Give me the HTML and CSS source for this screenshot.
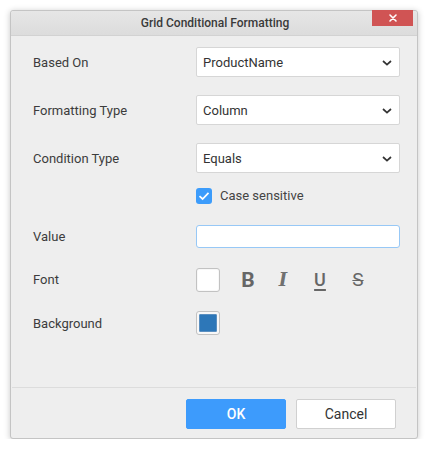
FILE: index.html
```html
<!DOCTYPE html>
<html>
<head>
<meta charset="utf-8">
<link rel="stylesheet" href="styles.css">
</head>
<body>
<div class="dialog">
  <div class="titlebar">
    <span class="title">Grid Conditional Formatting</span>
    <button class="close" aria-label="Close">
      <svg width="10" height="10" viewBox="0 0 10 10"><path d="M2 2 L8 8 M8 2 L2 8" stroke="#fff" stroke-width="1.6" stroke-linecap="round"/></svg>
    </button>
  </div>
  <div class="content">
    <div class="row r-select">
      <div class="label">Based On</div>
      <div class="select"><span>ProductName</span><svg class="chev" width="10" height="6" viewBox="0 0 10 6"><path d="M1 1 L5 4.6 L9 1" fill="none" stroke="#333" stroke-width="1.7"/></svg></div>
    </div>
    <div class="row r-select gap">
      <div class="label">Formatting Type</div>
      <div class="select"><span>Column</span><svg class="chev" width="10" height="6" viewBox="0 0 10 6"><path d="M1 1 L5 4.6 L9 1" fill="none" stroke="#333" stroke-width="1.7"/></svg></div>
    </div>
    <div class="row r-select gap">
      <div class="label">Condition Type</div>
      <div class="select"><span>Equals</span><svg class="chev" width="10" height="6" viewBox="0 0 10 6"><path d="M1 1 L5 4.6 L9 1" fill="none" stroke="#333" stroke-width="1.7"/></svg></div>
    </div>
    <div class="row r-check">
      <div class="label"></div>
      <div class="checkwrap">
        <span class="checkbox"><svg width="12" height="10" viewBox="0 0 12 10"><path d="M1.5 5.2 L4.6 8 L10.5 1.8" fill="none" stroke="#fff" stroke-width="1.7"/></svg></span>
        <span class="checklabel">Case sensitive</span>
      </div>
    </div>
    <div class="row r-value">
      <div class="label">Value</div>
      <div class="input"></div>
    </div>
    <div class="row r-font">
      <div class="label">Font</div>
      <div class="fontctl">
        <span class="swatch"><span class="fill white"></span></span>
        <span class="fbtn b">B</span>
        <span class="fbtn i">I</span>
        <span class="fbtn u">U</span>
        <span class="fbtn s">S</span>
      </div>
    </div>
    <div class="row r-bg">
      <div class="label">Background</div>
      <div class="fontctl">
        <span class="swatch"><span class="fill blue"></span></span>
      </div>
    </div>
  </div>
  <div class="footer">
    <button class="btn ok">OK</button>
    <button class="btn cancel">Cancel</button>
  </div>
</div>
</body>
</html>
```
FILE: styles.css
```css
html, body {
  margin: 0;
  padding: 0;
  background: #ffffff;
  font-family: Roboto, "Liberation Sans", Arial, sans-serif;
}
.dialog {
  margin: 10px 0 0 10px;
  width: 406px;
  height: 427px;
  border: 1px solid #c4c4c4;
  border-radius: 3px;
  background: #eeeeee;
  box-shadow: 0 1px 6px rgba(0,0,0,0.22);
  display: flex;
  flex-direction: column;
  position: relative;
}
.titlebar {
  height: 24px;
  flex: none;
  border-bottom: 1px solid #d2d2d2;
  background: linear-gradient(#e6e6e6, #dcdcdc);
  display: flex;
  align-items: center;
  justify-content: center;
  border-radius: 3px 3px 0 0;
}
.title {
  font-size: 12px;
  font-weight: 500;
  color: #3a3a3a;
  margin-left: 2px;
}
.close {
  position: absolute;
  top: -1px;
  right: 4px;
  width: 41px;
  height: 16px;
  background: #d05454;
  border: none;
  padding: 0;
  display: flex;
  align-items: center;
  justify-content: center;
}
.content {
  flex: 1;
  padding: 11px 17px 0 22px;
  display: flex;
  flex-direction: column;
}
.row {
  display: flex;
  align-items: center;
}
.label {
  width: 163px;
  flex: none;
  font-size: 13px;
  color: #3c3c3c;
}
.r-select { height: 30px; }
.r-select.gap { margin-top: 18px; }
.select {
  flex: 1;
  height: 28px;
  background: #fff;
  border: 1px solid #d6d6d6;
  border-radius: 2px;
  display: flex;
  align-items: center;
  justify-content: space-between;
  padding: 0 7px 0 6px;
  font-size: 13px;
  color: #333;
}
.chev { margin-top: 1px; }
.r-check { margin-top: 14px; height: 17px; }
.checkwrap { display: flex; align-items: center; }
.checkbox {
  width: 16px;
  height: 16px;
  background: #3c9cfb;
  border-radius: 3px;
  display: flex;
  align-items: center;
  justify-content: center;
}
.checklabel {
  margin-left: 8px;
  font-size: 13px;
  color: #444;
}
.r-value { margin-top: 20px; height: 25px; }
.input {
  flex: 1;
  height: 21px;
  background: #fff;
  border: 1px solid #97c8f6;
  border-radius: 3px;
}
.r-font { margin-top: 18px; height: 25px; }
.r-bg { margin-top: 18px; height: 26px; }
.fontctl { display: flex; align-items: center; }
.swatch {
  width: 20px;
  height: 20px;
  border: 1px solid #c2c2c2;
  border-radius: 3px;
  padding: 1px;
  background: #f8f8f8;
  display: flex;
}
.fill { flex: 1; border-radius: 1px; }
.fill.white { background: #ffffff; }
.fill.blue { background: #2d77b8; border: 1px solid #5a8fc0; margin: 1px; }
.fbtn {
  font-size: 21px;
  color: #666;
  width: 14px;
  text-align: center;
  line-height: 24px;
}
.fbtn.b { font-weight: bold; margin-left: 21px; }
.fbtn.i { font-style: italic; font-family: "DejaVu Serif", serif; font-size: 18px; font-weight: bold; color: #707070; margin-left: 21px; }
.fbtn.u { text-decoration: underline; text-decoration-thickness: 1.5px; text-underline-offset: 3px; margin-left: 23px; font-size: 18px; font-weight: 500; }
.fbtn.s { text-decoration: line-through; text-decoration-thickness: 1.3px; margin-left: 24px; font-size: 19px; }
.footer {
  height: 51px;
  flex: none;
  border-top: 1px solid #dcdcdc;
  margin: 0 1px;
  display: flex;
  justify-content: flex-end;
  align-items: flex-start;
  padding: 11px 20px 0 0;
  box-sizing: border-box;
  gap: 10px;
}
.btn {
  width: 100px;
  height: 30px;
  font-family: Roboto, "Liberation Sans", Arial, sans-serif;
  font-size: 14px;
  border-radius: 2px;
  padding: 0;
}
.ok {
  background: #3d9bfc;
  border: 1px solid #3d9bfc;
  color: #fff;
  font-weight: 500;
}
.cancel {
  background: #fff;
  border: 1px solid #d0d0d0;
  color: #333;
}
```
